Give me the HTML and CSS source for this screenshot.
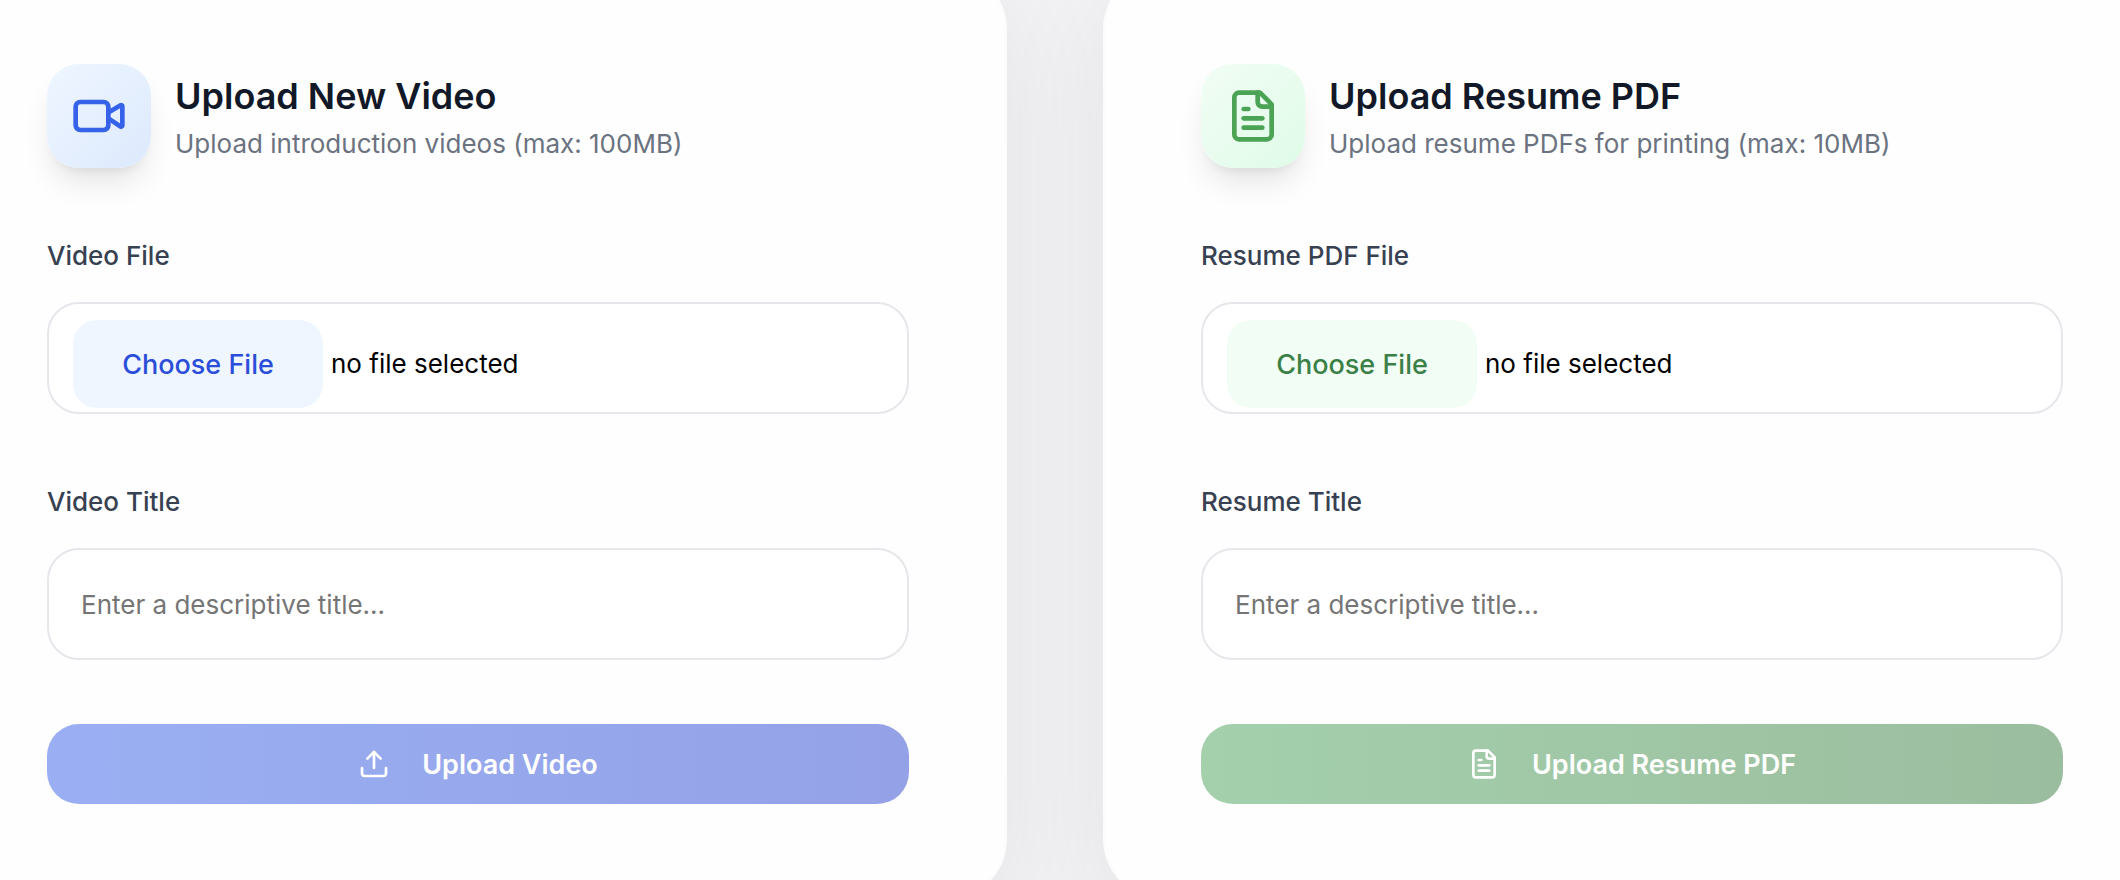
FILE: index.html
```html
<!DOCTYPE html>
<html lang="en">
<head>
  <meta charset="utf-8">
  <meta name="viewport" content="width=device-width, initial-scale=1">
  <title>Uploads</title>
  <link rel="stylesheet" href="styles.css">
</head>
<body>
  <main class="upload-grid">
    <section class="card card-video">
      <header class="card-header">
        <span class="badge">
          <svg class="badge-icon" viewBox="0 0 24 24" aria-hidden="true">
            <path d="m16 13 5.223 3.482a.5.5 0 0 0 .777-.416V7.87a.5.5 0 0 0-.752-.432L16 10.5"/>
            <rect x="2" y="6" width="14" height="12" rx="2"/>
          </svg>
        </span>
        <div class="heading">
          <h2 class="title">Upload New Video</h2>
          <p class="subtitle">Upload introduction videos (max: 100MB)</p>
        </div>
      </header>
      <form class="form">
        <div class="field">
          <label class="label" for="video-file">Video File</label>
          <div class="control file-control">
            <input class="file-input" type="file" id="video-file" accept="video/*">
            <button class="choose" type="button" data-for="video-file">Choose File</button>
            <span class="file-name">no file selected</span>
          </div>
        </div>
        <div class="field">
          <label class="label" for="video-title">Video Title</label>
          <input class="control text-control" type="text" id="video-title" placeholder="Enter a descriptive title...">
        </div>
        <button class="submit" type="submit" disabled>
          <svg class="submit-icon" viewBox="0 0 24 24" aria-hidden="true">
            <path d="M12 3v12"/>
            <path d="m17 8-5-5-5 5"/>
            <path d="M21 15v4a2 2 0 0 1-2 2H5a2 2 0 0 1-2-2v-4"/>
          </svg>
          <span>Upload Video</span>
        </button>
      </form>
    </section>

    <section class="card card-resume">
      <header class="card-header">
        <span class="badge">
          <svg class="badge-icon" viewBox="0 0 24 24" aria-hidden="true">
            <path d="M15 2H6a2 2 0 0 0-2 2v16a2 2 0 0 0 2 2h12a2 2 0 0 0 2-2V7Z"/>
            <path d="M14 2v4a2 2 0 0 0 2 2h4"/>
            <path d="M10 9H8"/>
            <path d="M16 13H8"/>
            <path d="M16 17H8"/>
          </svg>
        </span>
        <div class="heading">
          <h2 class="title">Upload Resume PDF</h2>
          <p class="subtitle">Upload resume PDFs for printing (max: 10MB)</p>
        </div>
      </header>
      <form class="form">
        <div class="field">
          <label class="label" for="resume-file">Resume PDF File</label>
          <div class="control file-control">
            <input class="file-input" type="file" id="resume-file" accept="application/pdf">
            <button class="choose" type="button" data-for="resume-file">Choose File</button>
            <span class="file-name">no file selected</span>
          </div>
        </div>
        <div class="field">
          <label class="label" for="resume-title">Resume Title</label>
          <input class="control text-control" type="text" id="resume-title" placeholder="Enter a descriptive title...">
        </div>
        <button class="submit" type="submit" disabled>
          <svg class="submit-icon" viewBox="0 0 24 24" aria-hidden="true">
            <path d="M15 2H6a2 2 0 0 0-2 2v16a2 2 0 0 0 2 2h12a2 2 0 0 0 2-2V7Z"/>
            <path d="M14 2v4a2 2 0 0 0 2 2h4"/>
            <path d="M10 9H8"/>
            <path d="M16 13H8"/>
            <path d="M16 17H8"/>
          </svg>
          <span>Upload Resume PDF</span>
        </button>
      </form>
    </section>
  </main>
  <script src="script.js"></script>
</body>
</html>
```
FILE: styles.css
```css
*,
*::before,
*::after {
  box-sizing: border-box;
}

body {
  margin: 0;
  overflow: hidden;
  background: #f3f3f5;
  color: #111827;
  font-family: Inter, "Liberation Sans", sans-serif;
  font-size: 26px;
}

/* The pair of cards bleeds past the window on every side. */
.upload-grid {
  display: grid;
  grid-template-columns: 1fr 1fr;
  gap: 96px;
  margin: -34px -41px 0 -51px;
}

.card {
  min-width: 0;
  padding: 96px;
  border: 2px solid #fcfcfd;
  border-radius: 64px;
  background: #fefefe;
  box-shadow: 0 24px 112px rgba(0, 0, 0, 0.07);
}

.card-video {
  --accent: #3562e8;
  --accent-text: #2a4eda;
  --tint: #eff6ff;
  --tint-end: #dce9fd;
  --submit-start: #9aaff3;
  --submit-end: #94a1e6;
}

.card-resume {
  --accent: #4ba355;
  --accent-text: #3b8046;
  --tint: #f2fdf5;
  --tint-end: #dffbe8;
  --submit-start: #a4d0ac;
  --submit-end: #9bbd9f;
}

.card-header {
  display: flex;
  align-items: center;
  gap: 24px;
  margin-bottom: 64px;
}

.badge {
  display: flex;
  flex: none;
  align-items: center;
  justify-content: center;
  width: 104px;
  height: 104px;
  border-radius: 32px;
  background: linear-gradient(135deg, var(--tint), var(--tint-end));
  box-shadow: 0 20px 30px -6px rgba(0, 0, 0, 0.1), 0 8px 12px -8px rgba(0, 0, 0, 0.1);
}

.badge-icon,
.submit-icon {
  fill: none;
  stroke: currentColor;
  stroke-width: 2;
  stroke-linecap: round;
  stroke-linejoin: round;
}

.badge-icon {
  width: 56px;
  height: 56px;
  color: var(--accent);
}

.heading {
  display: flex;
  flex-direction: column;
  gap: 4px;
}

.title {
  margin: 0;
  font-size: 36px;
  font-weight: 600;
  line-height: 52px;
}

.subtitle {
  margin: 0;
  color: #6b7280;
  line-height: 36px;
}

.form {
  display: flex;
  flex-direction: column;
  gap: 64px;
}

.field {
  display: flex;
  flex-direction: column;
  gap: 22px;
}

.label {
  color: #374151;
  font-weight: 500;
  line-height: 48px;
}

.control {
  width: 100%;
  height: 112px;
  border: 2px solid #e5e7eb;
  border-radius: 32px;
  background: #fff;
  font: inherit;
}

.file-control {
  display: flex;
  align-items: flex-start;
  gap: 8px;
  padding: 16px 24px;
}

.file-input {
  display: none;
}

.choose {
  min-width: 250px;
  height: 88px;
  padding: 0 48px;
  border: 0;
  border-radius: 24px;
  background: var(--tint);
  color: var(--accent-text);
  font: inherit;
  font-size: 27px;
  font-weight: 500;
}

.file-name {
  color: #000;
  line-height: 88px;
}

.text-control {
  padding: 0 32px;
  outline: none;
}

.text-control::placeholder {
  color: #757575;
  opacity: 1;
}

.submit {
  display: flex;
  align-items: center;
  justify-content: center;
  gap: 32px;
  height: 80px;
  padding: 0 32px;
  border: 0;
  border-radius: 32px;
  background: linear-gradient(90deg, var(--submit-start), var(--submit-end));
  color: #fff;
  font: inherit;
  font-size: 27px;
  font-weight: 600;
}

.submit-icon {
  width: 32px;
  height: 32px;
}
```
FILE: script.js
```js
document.querySelectorAll(".choose").forEach((button) => {
  const input = document.getElementById(button.dataset.for);
  const name = button.nextElementSibling;
  button.addEventListener("click", () => input.click());
  input.addEventListener("change", () => {
    name.textContent = input.files.length ? input.files[0].name : "no file selected";
  });
});
```
